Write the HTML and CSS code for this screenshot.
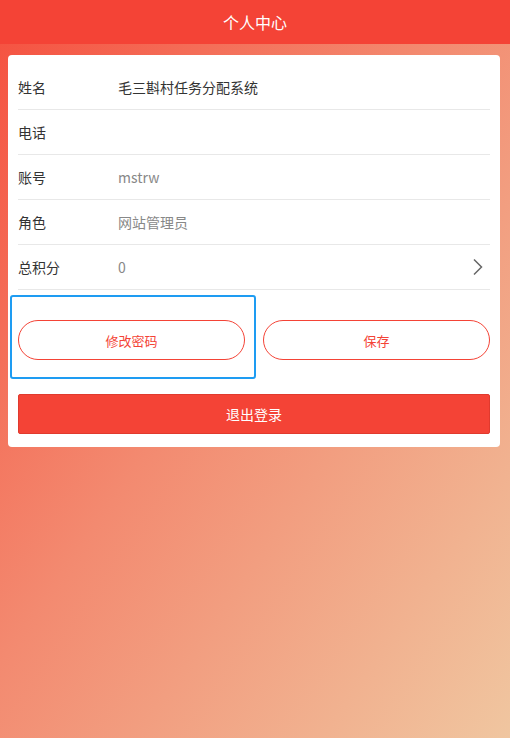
FILE: index.html
```html
<!DOCTYPE html>
<html lang="zh-CN">
<head>
    <meta charset="UTF-8">
    <meta name="viewport" content="width=device-width, initial-scale=1.0">
    <title>个人中心</title>
    <link rel="stylesheet" href="styles.css">
</head>
<body>
    <div class="header">个人中心</div>
    <div class="page">
        <div class="card">
            <div class="row">
                <span class="label">姓名</span>
                <span class="value dark">毛三斟村任务分配系统</span>
            </div>
            <div class="row">
                <span class="label">电话</span>
                <span class="value"></span>
            </div>
            <div class="row">
                <span class="label">账号</span>
                <span class="value">mstrw</span>
            </div>
            <div class="row">
                <span class="label">角色</span>
                <span class="value">网站管理员</span>
            </div>
            <div class="row">
                <span class="label">总积分</span>
                <span class="value">0</span>
                <svg class="arrow" width="12" height="18" viewBox="0 0 12 18">
                    <path d="M2 1.5 L9.5 9 L2 16.5" fill="none" stroke="#666" stroke-width="1.5"/>
                </svg>
            </div>
            <div class="actions">
                <div class="col focused">
                    <button class="pill">修改密码</button>
                </div>
                <div class="col">
                    <button class="pill">保存</button>
                </div>
            </div>
            <button class="logout">退出登录</button>
        </div>
    </div>
</body>
</html>
```

FILE: styles.css
```css
html, body {
    height: 100%;
}
body {
    margin: 0;
    font-family: "Noto Sans CJK SC", "Liberation Sans", sans-serif;
    font-size: 14px;
    color: #333;
    display: flex;
    flex-direction: column;
    background: linear-gradient(to bottom right, #f5503f 0%, #f38a70 45%, #f0c6a0 100%);
}
.header {
    height: 44px;
    line-height: 44px;
    background: #f44336;
    color: #fff;
    text-align: center;
    font-size: 16px;
}
.page {
    flex: 1;
    padding: 11px 10px 0 8px;
}
.card {
    background: #fff;
    border-radius: 4px;
    padding: 10px 10px 13px 10px;
}
.row {
    display: flex;
    align-items: center;
    height: 44px;
    border-bottom: 1px solid #e8e8e8;
}
.label {
    width: 100px;
    color: #333;
}
.value {
    flex: 1;
    color: #888;
}
.value.dark {
    color: #333;
}
.arrow {
    margin-right: 6px;
}
.actions {
    display: grid;
    grid-template-columns: 246px 1fr;
    margin: 5px -10px 0 -8px;
}
.col {
    padding: 23px 9px 17px 6px;
    border: 2px solid transparent;
    border-radius: 3px;
}
.col + .col {
    padding-left: 5px;
    padding-right: 8px;
}
.col.focused {
    border-color: #1e9cf2;
}
.pill {
    display: block;
    width: 100%;
    height: 40px;
    border: 1px solid #f44336;
    border-radius: 20px;
    background: #fff;
    color: #f44336;
    font-family: inherit;
    font-size: 13px;
}
.logout {
    display: block;
    width: 100%;
    height: 40px;
    margin-top: 15px;
    background: #f44336;
    border: 1px solid #e03a2e;
    border-radius: 2px;
    color: #fff;
    font-family: inherit;
    font-size: 14px;
}
```
